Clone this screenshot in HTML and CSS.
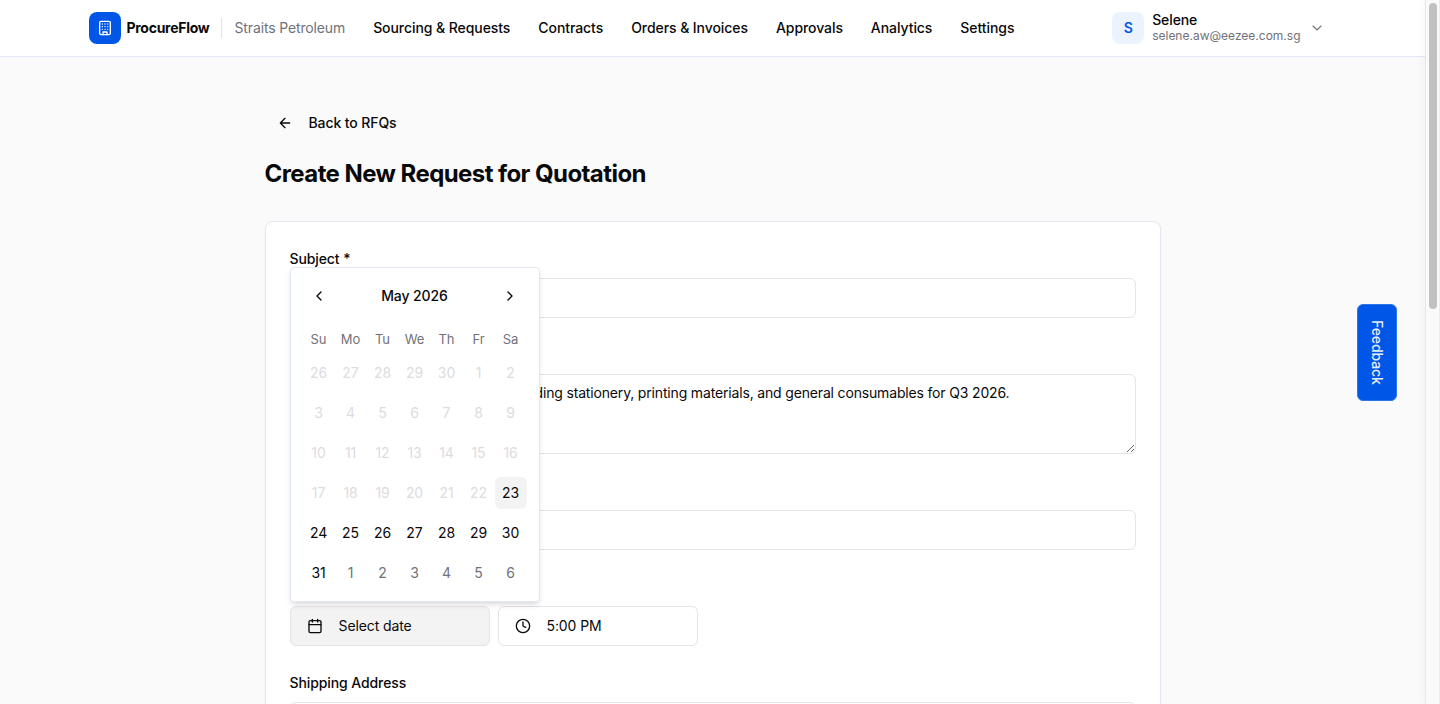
FILE: index.html
```html
<!DOCTYPE html>
<html lang="en">
<head>
    <meta charset="UTF-8">
    <meta name="viewport" content="width=device-width, initial-scale=1.0">
    <title>ProcureFlow</title>
    <link rel="stylesheet" href="styles.css">
</head>
<body>
    <div class="page">
        <header class="header">
            <div class="header-inner">
                <div class="logo">
                    <svg class="icon" viewBox="0 0 24 24"><rect width="16" height="20" x="4" y="2" rx="2"/><path d="M9 22v-4h6v4M8 6h.01M16 6h.01M12 6h.01M12 10h.01M12 14h.01M16 10h.01M16 14h.01M8 10h.01M8 14h.01"/></svg>
                </div>
                <span class="brand">ProcureFlow</span>
                <span class="company">Straits Petroleum</span>
                <nav class="nav">
                    <a>Sourcing &amp; Requests</a>
                    <a>Contracts</a>
                    <a>Orders &amp; Invoices</a>
                    <a>Approvals</a>
                    <a>Analytics</a>
                    <a>Settings</a>
                </nav>
                <div class="user">
                    <div class="avatar">S</div>
                    <div class="user-info">
                        <div class="user-name">Selene</div>
                        <div class="user-email">selene.aw@eezee.com.sg</div>
                    </div>
                    <svg class="icon chevron" viewBox="0 0 24 24"><path d="m6 9 6 6 6-6"/></svg>
                </div>
            </div>
        </header>

        <main class="main">
            <a class="back">
                <svg class="icon" viewBox="0 0 24 24"><path d="m12 19-7-7 7-7M19 12H5"/></svg>
                <span>Back to RFQs</span>
            </a>
            <h1>Create New Request for Quotation</h1>

            <form class="card">
                <div class="field">
                    <label>Subject *</label>
                    <input type="text">
                </div>
                <div class="field">
                    <label></label>
                    <textarea>including stationery, printing materials, and general consumables for Q3 2026.</textarea>
                </div>
                <div class="field">
                    <label></label>
                    <input type="text">
                </div>
                <div class="field">
                    <label></label>
                    <div class="pickers">
                        <button type="button" class="picker active">
                            <svg class="icon" viewBox="0 0 24 24"><path d="M8 2v4M16 2v4M3 10h18"/><rect width="18" height="18" x="3" y="4" rx="2"/></svg>
                            Select date
                        </button>
                        <button type="button" class="picker">
                            <svg class="icon" viewBox="0 0 24 24"><circle cx="12" cy="12" r="10"/><path d="M12 6v6l4 2"/></svg>
                            5:00 PM
                        </button>
                        <div class="calendar">
                            <div class="calendar-head">
                                <svg class="icon" viewBox="0 0 24 24"><path d="m15 18-6-6 6-6"/></svg>
                                <span>May 2026</span>
                                <svg class="icon" viewBox="0 0 24 24"><path d="m9 18 6-6-6-6"/></svg>
                            </div>
                            <div class="weekdays">
                                <span>Su</span><span>Mo</span><span>Tu</span><span>We</span><span>Th</span><span>Fr</span><span>Sa</span>
                            </div>
                            <div class="days">
                                <span class="off">26</span><span class="off">27</span><span class="off">28</span><span class="off">29</span><span class="off">30</span><span class="off">1</span><span class="off">2</span>
                                <span class="off">3</span><span class="off">4</span><span class="off">5</span><span class="off">6</span><span class="off">7</span><span class="off">8</span><span class="off">9</span>
                                <span class="off">10</span><span class="off">11</span><span class="off">12</span><span class="off">13</span><span class="off">14</span><span class="off">15</span><span class="off">16</span>
                                <span class="off">17</span><span class="off">18</span><span class="off">19</span><span class="off">20</span><span class="off">21</span><span class="off">22</span><span class="today">23</span>
                                <span>24</span><span>25</span><span>26</span><span>27</span><span>28</span><span>29</span><span>30</span>
                                <span>31</span><span class="next">1</span><span class="next">2</span><span class="next">3</span><span class="next">4</span><span class="next">5</span><span class="next">6</span>
                            </div>
                        </div>
                    </div>
                </div>
                <div class="field">
                    <label>Shipping Address</label>
                    <input type="text">
                </div>
            </form>
        </main>
    </div>
    <div class="scrollbar"><div class="thumb"></div></div>
    <button class="feedback"><span>Feedback</span></button>
</body>
</html>
```
FILE: styles.css
```css
* {
    box-sizing: border-box;
}
body {
    margin: 0;
    display: flex;
    height: 704px;
    overflow: hidden;
    font-family: Inter, "Liberation Sans", sans-serif;
    font-size: 14px;
    line-height: 20px;
    letter-spacing: -0.1px;
    color: #09090b;
    background: #fafafa;
}
input, textarea, button {
    font: inherit;
    letter-spacing: inherit;
    color: inherit;
}
.icon {
    width: 16px;
    height: 16px;
    fill: none;
    stroke: currentColor;
    stroke-width: 2;
    stroke-linecap: round;
    stroke-linejoin: round;
    flex-shrink: 0;
}
.page {
    flex: 1;
    height: 704px;
    overflow: hidden;
}

/* header */
.header {
    height: 57px;
    background: #fff;
    border-bottom: 1px solid #e2e8f0;
}
.header-inner {
    width: 1248px;
    height: 56px;
    margin: 0 auto;
    display: flex;
    align-items: center;
    white-space: nowrap;
}
.logo {
    width: 32px;
    height: 32px;
    border-radius: 8px;
    background: #0057e7;
    color: #fff;
    display: flex;
    align-items: center;
    justify-content: center;
}
.brand {
    margin-left: 6px;
    width: 94px;
    font-weight: 700;
    letter-spacing: -0.28px;
}
.company {
    padding-left: 13px;
    border-left: 1px solid #e4e4e7;
    color: #71717a;
    letter-spacing: -0.14px;
}
.nav {
    display: flex;
    gap: 28px;
    margin-left: 28px;
    font-weight: 500;
    letter-spacing: -0.07px;
}
.user {
    margin-left: auto;
    margin-right: 12px;
    display: flex;
    align-items: center;
}
.avatar {
    width: 32px;
    height: 32px;
    margin-right: 8px;
    border-radius: 8px;
    background: #ebf3ff;
    color: #0057e7;
    font-weight: 600;
    line-height: 32px;
    text-align: center;
}
.user-name {
    font-weight: 500;
    line-height: 16px;
}
.user-email {
    font-size: 12px;
    line-height: 16px;
    letter-spacing: 0;
    color: #71717a;
}
.chevron {
    margin-left: 8px;
    stroke-width: 1.7;
    color: #71717a;
}

/* content */
.main {
    width: 896px;
    margin: 0 auto;
    padding-top: 46px;
}
.back {
    display: flex;
    align-items: center;
    gap: 16px;
    height: 40px;
    padding-left: 12px;
    font-weight: 500;
}
h1 {
    margin: 15px 0 31px;
    font-size: 24px;
    line-height: 32px;
    font-weight: 700;
    letter-spacing: -0.57px;
}
.card {
    height: 600px;
    padding: 24px;
    background: #fff;
    border: 1px solid #e2e8f0;
    border-radius: 8px;
    box-shadow: 0 1px 2px rgba(0,0,0,0.05);
}
.field {
    margin-bottom: 24px;
}
label {
    display: block;
    height: 32px;
    line-height: 26px;
    font-weight: 500;
}
input[type="text"], textarea {
    display: block;
    width: 100%;
    height: 40px;
    padding: 8px 12px;
    border: 1px solid #e4e4e7;
    border-radius: 6px;
    background: #fff;
}
textarea {
    height: 80px;
    text-indent: 201.5px;
    letter-spacing: -0.165px;
    resize: vertical;
}
.pickers {
    position: relative;
    display: flex;
    gap: 8px;
}
.picker {
    width: 200px;
    height: 40px;
    padding: 0 16px;
    display: flex;
    align-items: center;
    gap: 16px;
    background: #fff;
    border: 1px solid #e4e4e7;
    border-radius: 6px;
}
.picker.active {
    background: #f3f3f4;
}

/* date popover */
.calendar {
    position: absolute;
    left: 0;
    bottom: 44px;
    width: 250px;
    height: 335px;
    padding: 12px;
    background: #fff;
    border: 1px solid #e2e8f0;
    border-radius: 4px;
    box-shadow: 0 4px 6px -1px rgba(0,0,0,0.1), 0 2px 4px -2px rgba(0,0,0,0.1);
}
.calendar-head {
    display: flex;
    align-items: center;
    justify-content: space-between;
    height: 32px;
    padding: 0 8px;
    font-weight: 500;
}
.weekdays, .days {
    display: grid;
    grid-template-columns: repeat(7, 32px);
    text-align: center;
}
.weekdays {
    margin: 17px 0 7px;
    font-size: 13px;
    line-height: 21px;
    letter-spacing: 0;
    color: #71717a;
}
.days {
    row-gap: 8px;
    line-height: 32px;
}
.off {
    color: #dcdcde;
}
.next {
    color: #71717a;
}
.today {
    border-radius: 6px;
    background: #f3f3f4;
}

/* right edge */
.scrollbar {
    width: 15px;
    padding: 3px 0 0 3px;
    background: #fafafa;
    border-left: 1px solid #e8e8e8;
    border-right: 1px solid #ededed;
    box-shadow: 0 0 12px rgba(0,0,0,0.05);
}
.thumb {
    width: 8px;
    height: 306px;
    border-radius: 4px;
    background: #c1c1c1;
}
.feedback {
    position: fixed;
    top: 304px;
    right: 43px;
    width: 40px;
    height: 97px;
    padding: 4px 1px 0 0;
    border: 1px solid #2e75ea;
    border-radius: 6px;
    background: #0057e7;
    color: #e6eefc;
    font-weight: 500;
}
.feedback span {
    writing-mode: vertical-rl;
}
```
